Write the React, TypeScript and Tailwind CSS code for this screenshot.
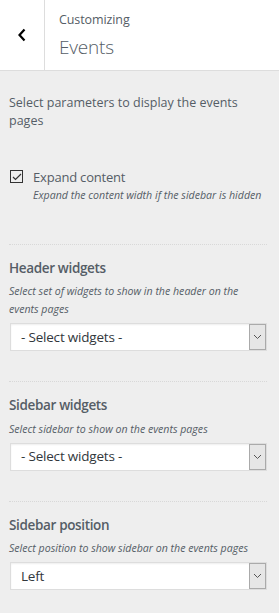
import React from "react";

const font = { fontFamily: '"Open Sans", "Noto Sans", sans-serif' };

const SelectBox = ({ value }: { value: string }) => (
  <div className="ml-[1px] mr-[12px] flex h-[28px] border border-[#ddd] bg-white shadow-[inset_0_1px_2px_rgba(0,0,0,0.07)]">
    <div className="flex flex-1 items-center pl-[10px] text-[13.5px] tracking-[-0.2px] text-[#32373c]">{value}</div>
    <div className="flex w-[17px] items-center justify-center border border-[#aaa] bg-[#e6e6e6]">
      <svg width="9" height="6" viewBox="0 0 9 6" fill="none">
        <path d="M1 1l3.5 3.5L8 1" stroke="#555" strokeWidth="1" />
      </svg>
    </div>
  </div>
);

const Section = ({
  title,
  desc,
  value,
  divider = true,
}: {
  title: string;
  desc: string;
  value: string;
  divider?: boolean;
}) => (
  <div>
    <div className="mt-[13px] text-[13.5px] font-semibold tracking-[-0.35px] text-[#555d66]">{title}</div>
    <p className="mt-[4px] pr-[18px] text-[10.6px] italic leading-[18px] text-[#555d66]">{desc}</p>
    <div className="mt-[5px]">
      <SelectBox value={value} />
    </div>
    {divider && <div className="mr-[12px] mt-[30px] border-t border-dotted border-[#d8d8d8]" />}
  </div>
);

export default function App() {
  return (
    <div className="min-h-[613px] w-[279px] bg-[#eee]" style={font}>
      {/* Header */}
      <div className="flex h-[71px] border-b border-[#ddd] bg-white">
        <button className="flex w-[45px] items-center justify-center border-r border-[#ddd]">
          <svg width="10" height="14" viewBox="0 0 10 14" fill="none">
            <path d="M7.5 1.5L2.5 7l5 5.5" stroke="#000" strokeWidth="2.2" />
          </svg>
        </button>
        <div className="pl-[14px] pt-[11px]">
          <div className="text-[12.5px] leading-[18px] tracking-[-0.1px] text-[#555d66]">Customizing</div>
          <div className="mt-[5px] text-[19px] font-light leading-[26px] tracking-[-0.2px] text-[#555d66]">Events</div>
        </div>
      </div>

      <div className="pl-[9px]">
        <p className="mt-[23px] pr-[12px] text-[12.5px] leading-[18px] text-[#555d66]">
          Select parameters to display the events pages
        </p>

        {/* Checkbox */}
        <div className="mt-[39px] flex">
          <div className="ml-[1px] mt-[1px] flex h-[13px] w-[13px] items-center justify-center border border-[#333] bg-transparent">
            <svg width="10" height="8" viewBox="0 0 10 8" fill="none">
              <path d="M1 4l2.5 2.5L9 1" stroke="#333" strokeWidth="1.2" />
            </svg>
          </div>
          <div className="ml-[10px]">
            <div className="text-[13px] leading-[16px] tracking-[-0.2px] text-[#555d66]">Expand content</div>
            <div className="mt-[3px] text-[10.6px] italic leading-[14px] text-[#555d66]">
              Expand the content width if the sidebar is hidden
            </div>
          </div>
        </div>
        <div className="mr-[12px] mt-[42px] border-t border-dotted border-[#d8d8d8]" />

        <Section
          title="Header widgets"
          desc="Select set of widgets to show in the header on the events pages"
          value="- Select widgets -"
        />
        <Section
          title="Sidebar widgets"
          desc="Select sidebar to show on the events pages"
          value="- Select widgets -"
        />
        <Section
          title="Sidebar position"
          desc="Select position to show sidebar on the events pages"
          value="Left"
          divider={false}
        />
      </div>
    </div>
  );
}
